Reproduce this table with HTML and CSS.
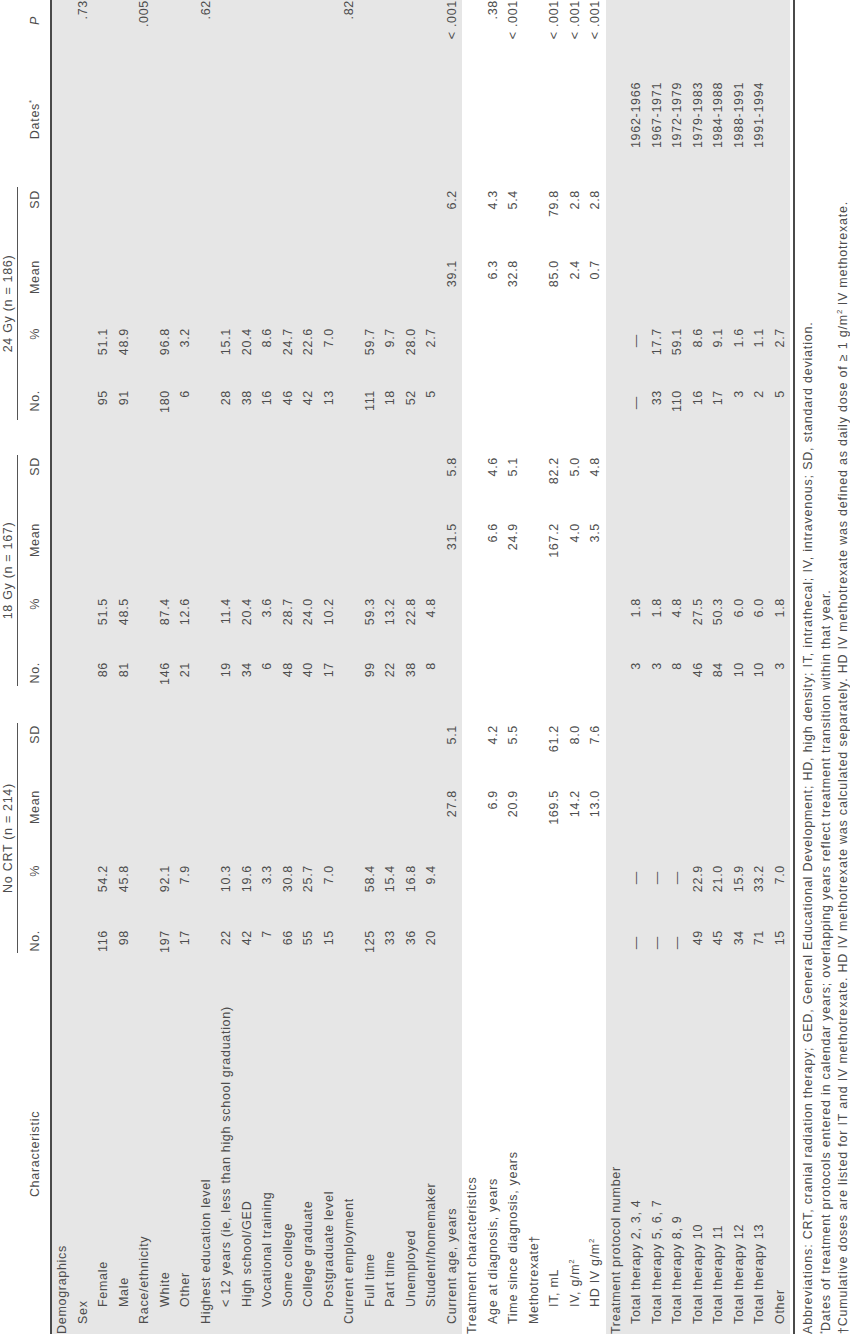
FILE: index.html
```html
<!DOCTYPE html>
<html lang="en">
<head>
<meta charset="utf-8">
<title>Table 1</title>
<link rel="stylesheet" href="styles.css">
</head>
<body>
<div class="stage">
<div class="page">
  <table class="tbl">
    <colgroup>
      <col class="c-char"><col class="c44"><col class="c65"><col class="c75"><col class="c65">
      <col class="c63"><col class="c64"><col class="c75"><col class="c66">
      <col class="c67"><col class="c62"><col class="c68"><col class="c70">
      <col class="c108"><col class="c82">
    </colgroup>
    <thead>
      <tr class="grp-row">
        <th></th>
        <th colspan="4" class="grp"><div class="span s1">No CRT (n = 214)</div></th>
        <th colspan="4" class="grp"><div class="span s2">18 Gy (n = 167)</div></th>
        <th colspan="4" class="grp"><div class="span s3">24 Gy (n = 186)</div></th>
        <th></th><th></th>
      </tr>
      <tr class="head-row">
        <th class="h-char">Characteristic</th>
        <th class="h-no">No.</th><th class="h-pct">%</th><th class="h-mean">Mean</th><th class="h-sd">SD</th>
        <th class="h-no">No.</th><th class="h-pct">%</th><th class="h-mean">Mean</th><th class="h-sd">SD</th>
        <th class="h-no">No.</th><th class="h-pct">%</th><th class="h-mean">Mean</th><th class="h-sd">SD</th>
        <th class="h-dates">Dates<sup>*</sup></th><th class="h-p"><i>P</i></th>
      </tr>
    </thead>
    <tbody class="band">
      <tr><td class="l0">Demographics</td><td></td><td></td><td></td><td></td><td></td><td></td><td></td><td></td><td></td><td></td><td></td><td></td><td></td><td></td></tr>
      <tr><td class="l1">Sex</td><td></td><td></td><td></td><td></td><td></td><td></td><td></td><td></td><td></td><td></td><td></td><td></td><td></td><td>.73</td></tr>
      <tr><td class="l2">Female</td><td>116</td><td>54.2</td><td></td><td></td><td>86</td><td>51.5</td><td></td><td></td><td>95</td><td>51.1</td><td></td><td></td><td></td><td></td></tr>
      <tr><td class="l2">Male</td><td>98</td><td>45.8</td><td></td><td></td><td>81</td><td>48.5</td><td></td><td></td><td>91</td><td>48.9</td><td></td><td></td><td></td><td></td></tr>
      <tr><td class="l1">Race/ethnicity</td><td></td><td></td><td></td><td></td><td></td><td></td><td></td><td></td><td></td><td></td><td></td><td></td><td></td><td>.005</td></tr>
      <tr><td class="l2">White</td><td>197</td><td>92.1</td><td></td><td></td><td>146</td><td>87.4</td><td></td><td></td><td>180</td><td>96.8</td><td></td><td></td><td></td><td></td></tr>
      <tr><td class="l2">Other</td><td>17</td><td>7.9</td><td></td><td></td><td>21</td><td>12.6</td><td></td><td></td><td>6</td><td>3.2</td><td></td><td></td><td></td><td></td></tr>
      <tr><td class="l1">Highest education level</td><td></td><td></td><td></td><td></td><td></td><td></td><td></td><td></td><td></td><td></td><td></td><td></td><td></td><td>.62</td></tr>
      <tr><td class="l2">&lt; 12 years (ie, less than high school graduation)</td><td>22</td><td>10.3</td><td></td><td></td><td>19</td><td>11.4</td><td></td><td></td><td>28</td><td>15.1</td><td></td><td></td><td></td><td></td></tr>
      <tr><td class="l2">High school/GED</td><td>42</td><td>19.6</td><td></td><td></td><td>34</td><td>20.4</td><td></td><td></td><td>38</td><td>20.4</td><td></td><td></td><td></td><td></td></tr>
      <tr><td class="l2">Vocational training</td><td>7</td><td>3.3</td><td></td><td></td><td>6</td><td>3.6</td><td></td><td></td><td>16</td><td>8.6</td><td></td><td></td><td></td><td></td></tr>
      <tr><td class="l2">Some college</td><td>66</td><td>30.8</td><td></td><td></td><td>48</td><td>28.7</td><td></td><td></td><td>46</td><td>24.7</td><td></td><td></td><td></td><td></td></tr>
      <tr><td class="l2">College graduate</td><td>55</td><td>25.7</td><td></td><td></td><td>40</td><td>24.0</td><td></td><td></td><td>42</td><td>22.6</td><td></td><td></td><td></td><td></td></tr>
      <tr><td class="l2">Postgraduate level</td><td>15</td><td>7.0</td><td></td><td></td><td>17</td><td>10.2</td><td></td><td></td><td>13</td><td>7.0</td><td></td><td></td><td></td><td></td></tr>
      <tr><td class="l1">Current employment</td><td></td><td></td><td></td><td></td><td></td><td></td><td></td><td></td><td></td><td></td><td></td><td></td><td></td><td>.82</td></tr>
      <tr><td class="l2">Full time</td><td>125</td><td>58.4</td><td></td><td></td><td>99</td><td>59.3</td><td></td><td></td><td>111</td><td>59.7</td><td></td><td></td><td></td><td></td></tr>
      <tr><td class="l2">Part time</td><td>33</td><td>15.4</td><td></td><td></td><td>22</td><td>13.2</td><td></td><td></td><td>18</td><td>9.7</td><td></td><td></td><td></td><td></td></tr>
      <tr><td class="l2">Unemployed</td><td>36</td><td>16.8</td><td></td><td></td><td>38</td><td>22.8</td><td></td><td></td><td>52</td><td>28.0</td><td></td><td></td><td></td><td></td></tr>
      <tr><td class="l2">Student/homemaker</td><td>20</td><td>9.4</td><td></td><td></td><td>8</td><td>4.8</td><td></td><td></td><td>5</td><td>2.7</td><td></td><td></td><td></td><td></td></tr>
      <tr><td class="l1">Current age, years</td><td></td><td></td><td>27.8</td><td>5.1</td><td></td><td></td><td>31.5</td><td>5.8</td><td></td><td></td><td>39.1</td><td>6.2</td><td></td><td>&lt; .001</td></tr>
    </tbody>
    <tbody>
      <tr><td class="l0">Treatment characteristics</td><td></td><td></td><td></td><td></td><td></td><td></td><td></td><td></td><td></td><td></td><td></td><td></td><td></td><td></td></tr>
      <tr><td class="l1">Age at diagnosis, years</td><td></td><td></td><td>6.9</td><td>4.2</td><td></td><td></td><td>6.6</td><td>4.6</td><td></td><td></td><td>6.3</td><td>4.3</td><td></td><td>.38</td></tr>
      <tr><td class="l1">Time since diagnosis, years</td><td></td><td></td><td>20.9</td><td>5.5</td><td></td><td></td><td>24.9</td><td>5.1</td><td></td><td></td><td>32.8</td><td>5.4</td><td></td><td>&lt; .001</td></tr>
      <tr><td class="l1">Methotrexate†</td><td></td><td></td><td></td><td></td><td></td><td></td><td></td><td></td><td></td><td></td><td></td><td></td><td></td><td></td></tr>
      <tr><td class="l2">IT, mL</td><td></td><td></td><td>169.5</td><td>61.2</td><td></td><td></td><td>167.2</td><td>82.2</td><td></td><td></td><td>85.0</td><td>79.8</td><td></td><td>&lt; .001</td></tr>
      <tr><td class="l2">IV, g/m<sup>2</sup></td><td></td><td></td><td>14.2</td><td>8.0</td><td></td><td></td><td>4.0</td><td>5.0</td><td></td><td></td><td>2.4</td><td>2.8</td><td></td><td>&lt; .001</td></tr>
      <tr><td class="l2">HD IV g/m<sup>2</sup></td><td></td><td></td><td>13.0</td><td>7.6</td><td></td><td></td><td>3.5</td><td>4.8</td><td></td><td></td><td>0.7</td><td>2.8</td><td></td><td>&lt; .001</td></tr>
    </tbody>
    <tbody class="band">
      <tr><td class="l0">Treatment protocol number</td><td></td><td></td><td></td><td></td><td></td><td></td><td></td><td></td><td></td><td></td><td></td><td></td><td></td><td></td></tr>
      <tr><td class="l1">Total therapy 2, 3, 4</td><td class="dash">—</td><td class="dash">—</td><td></td><td></td><td>3</td><td>1.8</td><td></td><td></td><td class="dash">—</td><td class="dash">—</td><td></td><td></td><td>1962-1966</td><td></td></tr>
      <tr><td class="l1">Total therapy 5, 6, 7</td><td class="dash">—</td><td class="dash">—</td><td></td><td></td><td>3</td><td>1.8</td><td></td><td></td><td>33</td><td>17.7</td><td></td><td></td><td>1967-1971</td><td></td></tr>
      <tr><td class="l1">Total therapy 8, 9</td><td class="dash">—</td><td class="dash">—</td><td></td><td></td><td>8</td><td>4.8</td><td></td><td></td><td>110</td><td>59.1</td><td></td><td></td><td>1972-1979</td><td></td></tr>
      <tr><td class="l1">Total therapy 10</td><td>49</td><td>22.9</td><td></td><td></td><td>46</td><td>27.5</td><td></td><td></td><td>16</td><td>8.6</td><td></td><td></td><td>1979-1983</td><td></td></tr>
      <tr><td class="l1">Total therapy 11</td><td>45</td><td>21.0</td><td></td><td></td><td>84</td><td>50.3</td><td></td><td></td><td>17</td><td>9.1</td><td></td><td></td><td>1984-1988</td><td></td></tr>
      <tr><td class="l1">Total therapy 12</td><td>34</td><td>15.9</td><td></td><td></td><td>10</td><td>6.0</td><td></td><td></td><td>3</td><td>1.6</td><td></td><td></td><td>1988-1991</td><td></td></tr>
      <tr><td class="l1">Total therapy 13</td><td>71</td><td>33.2</td><td></td><td></td><td>10</td><td>6.0</td><td></td><td></td><td>2</td><td>1.1</td><td></td><td></td><td>1991-1994</td><td></td></tr>
      <tr><td class="l1">Other</td><td>15</td><td>7.0</td><td></td><td></td><td>3</td><td>1.8</td><td></td><td></td><td>5</td><td>2.7</td><td></td><td></td><td></td><td></td></tr>
    </tbody>
  </table>
  <div class="notes">
    <p>Abbreviations: CRT, cranial radiation therapy; GED, General Educational Development; HD, high density; IT, intrathecal; IV, intravenous; SD, standard deviation.</p>
    <p><sup>*</sup>Dates of treatment protocols entered in calendar years; overlapping years reflect treatment transition within that year.</p>
    <p>†Cumulative doses are listed for IT and IV methotrexate. HD IV methotrexate was calculated separately. HD IV methotrexate was defined as daily dose of ≥ 1 g/m<sup>2</sup> IV methotrexate.</p>
  </div>
</div>
</div>
</body>
</html>
```
FILE: styles.css
```css
html {
  background: #ffffff;
}

body {
  margin: 0;
  padding: 0;
}

.stage {
  width: 850px;
  height: 1334px;
  overflow: hidden;
}

.page {
  width: 1334px;
  height: 850px;
  transform-origin: 0 0;
  transform: translateY(1334px) rotate(-90deg);
  font-family: "Liberation Sans", Arial, sans-serif;
  font-size: 12.5px;
  letter-spacing: 0.7px;
  color: #4d4d4d;
}

.tbl {
  width: 1334px;
  table-layout: fixed;
  border-collapse: separate;
  border-spacing: 0;
}

.c-char { width: 360px; }
.c44 { width: 44px; }
.c62 { width: 62px; }
.c63 { width: 63px; }
.c64 { width: 64px; }
.c65 { width: 65px; }
.c66 { width: 66px; }
.c67 { width: 67px; }
.c68 { width: 68px; }
.c70 { width: 70px; }
.c75 { width: 75px; }
.c82 { width: 82px; }
.c108 { width: 108px; }

th {
  font-weight: normal;
  padding: 0;
}

.grp-row th {
  height: 19px;
  vertical-align: top;
}

.span {
  line-height: 17px;
  border-bottom: 1px solid #555;
  text-align: center;
  white-space: nowrap;
  margin-right: -2px;
}
.s1 { margin-left: 21px; }
.s2 { margin-left: 39px; }
.s3 { margin-left: 37px; margin-right: -3px; }

.head-row th {
  height: 31px;
  vertical-align: middle;
  text-align: right;
  border-bottom: 2px solid #4a4a4a;
  white-space: nowrap;
  line-height: 14px;
}
.head-row .h-char { text-align: center; }
.head-row .h-dates { padding-right: 18px; }
.head-row .h-p { padding-right: 16px; }

td {
  padding: 0;
  height: 20.5px;
  line-height: 14px;
  vertical-align: middle;
  text-align: right;
  white-space: nowrap;
}

td.l0, td.l1, td.l2 { text-align: left; }
td.l0 { padding-left: 0; }
td.l1 { padding-left: 10px; }
td.l2 { padding-left: 27px; }

td.dash { padding-right: 6px; }

.band td { background: #e6e6e6; }

sup {
  font-size: 0.62em;
  line-height: 0;
  vertical-align: super;
  letter-spacing: 0;
}

.notes {
  margin-top: 3px;
  border-top: 2px solid #4a4a4a;
  padding-top: 5px;
  letter-spacing: 0.8px;
}

.notes p {
  margin: 0;
  line-height: 17.5px;
  white-space: nowrap;
}
```
